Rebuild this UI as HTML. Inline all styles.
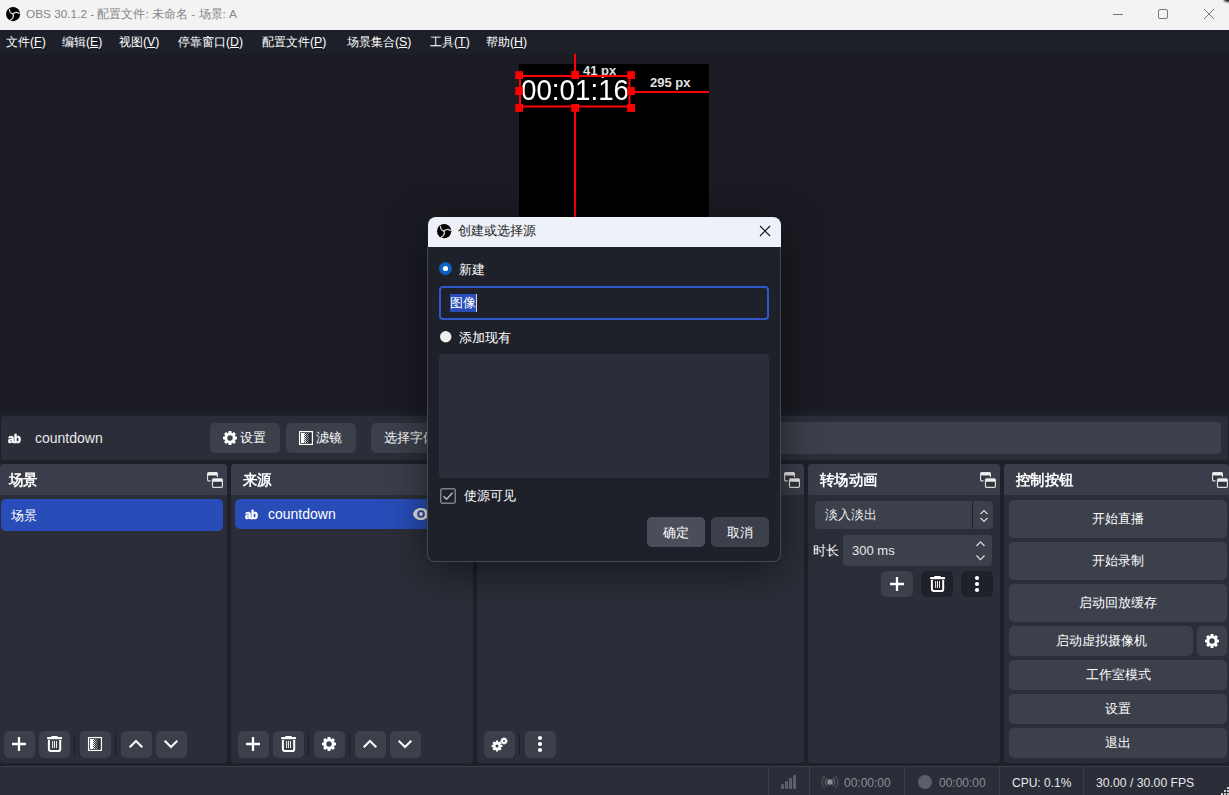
<!DOCTYPE html>
<html><head><meta charset="utf-8">
<style>
*{box-sizing:border-box;margin:0;padding:0}
html,body{width:1229px;height:795px;overflow:hidden;background:#1f212a;font-family:"Liberation Sans",sans-serif;color:#fff}
.a{position:absolute}
.t{position:absolute;white-space:nowrap;line-height:1}
.btn{position:absolute;background:#3c404b;border-radius:5px}
.dock{position:absolute;background:#2b2e38;border-radius:4px;overflow:hidden}
.dt{position:absolute;left:0;right:0;top:0;height:31px;background:#3b3e4a}
.dtt{position:absolute;top:8px;font-size:15px;font-weight:bold;white-space:nowrap;line-height:1;transform:scaleX(.96);transform-origin:0 0}
.sep{position:absolute;width:2px;background:#1f212a}
.vs{position:absolute;width:1px;background:#1b1d24;top:734px;height:21px}
svg{position:absolute;overflow:visible}
.m{font-size:12.3px;top:36px}
.cb{position:absolute;background:#3c404b;border-radius:5px;font-size:13px;line-height:1;text-align:center;white-space:nowrap}
</style></head><body>
<!-- ============ title bar ============ -->
<div class="a" style="left:0;top:0;width:1229px;height:30px;background:#f3f3f3"></div>
<svg style="left:5.9px;top:6.8px" width="14.2" height="14.2" viewBox="0 0 14.2 14.2"><circle cx="7.1" cy="7.1" r="7.1" fill="#000"/><g fill="none" stroke="#d0d0d0" stroke-linecap="round"><path d="M3.5 2.4C3.3 4.6 4.6 6.3 7 7" stroke-width="1.3"/><path d="M7 7C8.4 5.4 11.2 4.8 13.2 6.4" stroke-width="1.3"/><path d="M7 7C7.7 8.9 6.9 11.6 4.4 13" stroke-width="1.3"/></g></svg>
<div class="t" style="left:26px;top:9px;font-size:11.8px;color:#858585">OBS 30.1.2 - 配置文件: 未命名 - 场景: A</div>
<svg style="left:1113px;top:14px" width="10" height="1"><rect x="0" y="0" width="10" height="1" fill="#7a7a7a"/></svg>
<svg style="left:1158px;top:9px" width="10" height="10"><rect x="0.5" y="0.5" width="9" height="9" rx="1.5" fill="none" stroke="#7a7a7a" stroke-width="1"/></svg>
<svg style="left:1204px;top:9px" width="10" height="10"><path d="M0 0L10 10M10 0L0 10" stroke="#7a7a7a" stroke-width="1"/></svg>

<div class="a" style="left:1224px;top:-3px;width:8px;height:5px;border-radius:50%;background:#111;filter:blur(1px)"></div>
<!-- ============ menu bar ============ -->
<div class="a" style="left:0;top:30px;width:1229px;height:24px;background:#1e2029"></div>
<div class="t m" style="left:6px">文件(<u>F</u>)</div>
<div class="t m" style="left:62px">编辑(<u>E</u>)</div>
<div class="t m" style="left:119px">视图(<u>V</u>)</div>
<div class="t m" style="left:178px">停靠窗口(<u>D</u>)</div>
<div class="t m" style="left:262px">配置文件(<u>P</u>)</div>
<div class="t m" style="left:347px">场景集合(<u>S</u>)</div>
<div class="t m" style="left:430px">工具(<u>T</u>)</div>
<div class="t m" style="left:486px">帮助(<u>H</u>)</div>

<!-- ============ preview ============ -->
<div class="a" style="left:0;top:54px;width:1229px;height:358px;background:#1b1c23"></div>
<div class="a" style="left:519px;top:64px;width:190px;height:348px;background:#000"></div>
<div class="t" style="left:520.5px;top:75.3px;font-size:30px;color:#fff;transform:scaleX(.925);transform-origin:0 0">00:01:16</div>
<div class="t" style="left:583px;top:64px;font-size:13px;font-weight:bold;color:#e0e0e0">41 px</div>
<div class="t" style="left:650px;top:76px;font-size:13px;font-weight:bold;color:#e0e0e0">295 px</div>
<svg style="left:0;top:0" width="1229" height="795">
 <g fill="none" stroke="#ff0000" stroke-width="2">
  <line x1="575" y1="54" x2="575" y2="76"/>
  <rect x="520" y="76" width="109.5" height="30.5"/>
  <line x1="629" y1="92" x2="709" y2="92"/>
  <line x1="575" y1="107" x2="575" y2="412"/>
 </g>
 <g fill="#ff0000">
  <rect x="515.3" y="71.2" width="7.7" height="7.8"/><rect x="571.3" y="70.8" width="7.7" height="8.2"/><rect x="627.2" y="71.2" width="7.7" height="7.8"/>
  <rect x="515.3" y="87" width="7.7" height="8"/><rect x="627.2" y="87" width="7.7" height="8"/>
  <rect x="515.3" y="104" width="7.7" height="7.9"/><rect x="571.3" y="104" width="7.7" height="7.9"/><rect x="627.2" y="104" width="7.7" height="7.9"/>
 </g>
</svg>

<!-- ============ context bar ============ -->
<div class="a" style="left:1px;top:416px;width:1227px;height:44px;background:#2b2e38;border-radius:4px"></div>
<div class="t" style="left:8px;top:432px;font-size:13px;font-weight:bold;-webkit-text-stroke:.5px #fff;letter-spacing:-.3px;transform:scaleX(.88);transform-origin:0 0">ab</div>
<div class="t" style="left:35px;top:431px;font-size:14px;color:#e8e8ea">countdown</div>
<div class="btn" style="left:210px;top:423px;width:70px;height:30px"></div>
<div class="t" style="left:240px;top:431px;font-size:13px">设置</div>
<div class="btn" style="left:286px;top:423px;width:70px;height:30px"></div>
<div class="t" style="left:316px;top:431px;font-size:13px">滤镜</div>
<div class="btn" style="left:371px;top:423px;width:90px;height:30px"></div>
<div class="t" style="left:384px;top:431px;font-size:13px">选择字体</div>
<div class="a" style="left:780px;top:422px;width:441px;height:32px;background:#3c404b;border-radius:4px"></div>

<!-- ============ docks ============ -->
<!-- scenes -->
<div class="dock" style="left:0;top:464px;width:227px;height:299px">
 <div class="dt"><span class="dtt" style="left:9px">场景</span></div>
</div>
<div class="a" style="left:1px;top:499px;width:222px;height:32px;background:#284cb8;border-radius:5px"></div>
<div class="t" style="left:11px;top:509px;font-size:13px">场景</div>
<div class="btn" style="left:4px;top:731px;width:31px;height:27px"></div>
<div class="btn" style="left:39px;top:731px;width:31px;height:27px"></div>
<div class="vs" style="left:74px"></div>
<div class="btn" style="left:80px;top:731px;width:31px;height:27px"></div>
<div class="vs" style="left:115px"></div>
<div class="btn" style="left:121px;top:731px;width:31px;height:27px"></div>
<div class="btn" style="left:156px;top:731px;width:31px;height:27px"></div>

<!-- sources -->
<div class="dock" style="left:231px;top:464px;width:242px;height:299px">
 <div class="dt"><span class="dtt" style="left:12px">来源</span></div>
</div>
<div class="a" style="left:235px;top:499px;width:234px;height:30px;background:#284cb8;border-radius:5px"></div>
<div class="t" style="left:244.5px;top:508px;font-size:13px;font-weight:bold;-webkit-text-stroke:.5px #fff;letter-spacing:-.3px;transform:scaleX(.88);transform-origin:0 0">ab</div>
<div class="t" style="left:268px;top:507px;font-size:14px">countdown</div>
<div class="btn" style="left:238px;top:731px;width:31px;height:27px"></div>
<div class="btn" style="left:273px;top:731px;width:31px;height:27px"></div>
<div class="vs" style="left:308px"></div>
<div class="btn" style="left:314px;top:731px;width:31px;height:27px"></div>
<div class="vs" style="left:349px"></div>
<div class="btn" style="left:355px;top:731px;width:31px;height:27px"></div>
<div class="btn" style="left:390px;top:731px;width:31px;height:27px"></div>

<!-- audio mixer -->
<div class="dock" style="left:477px;top:464px;width:327px;height:299px">
 <div class="dt"><span class="dtt" style="left:12px">混音器</span></div>
</div>
<div class="btn" style="left:484px;top:731px;width:31px;height:27px"></div>
<div class="vs" style="left:519px"></div>
<div class="btn" style="left:525px;top:731px;width:31px;height:27px"></div>

<!-- transitions -->
<div class="dock" style="left:808px;top:464px;width:192px;height:299px">
 <div class="dt"><span class="dtt" style="left:12px">转场动画</span></div>
</div>
<div class="a" style="left:815px;top:501px;width:178px;height:28px;background:#3c404b;border-radius:4px"></div>
<div class="a" style="left:972px;top:501px;width:1px;height:28px;background:#1f212a"></div>
<div class="t" style="left:825px;top:508px;font-size:13px;color:#e8e8ea">淡入淡出</div>
<div class="t" style="left:813px;top:544px;font-size:13px">时长</div>
<div class="a" style="left:843px;top:535px;width:149px;height:31px;background:#3c404b;border-radius:4px"></div>
<div class="t" style="left:852px;top:544px;font-size:13px;color:#e8e8ea">300 ms</div>
<div class="btn" style="left:881px;top:571px;width:32px;height:26px"></div>
<div class="btn" style="left:921px;top:571px;width:32px;height:26px;background:#1f212a"></div>
<div class="btn" style="left:961px;top:571px;width:32px;height:26px;background:#1f212a"></div>

<!-- controls -->
<div class="dock" style="left:1004px;top:464px;width:225px;height:299px">
 <div class="dt"><span class="dtt" style="left:12px">控制按钮</span></div>
</div>
<div class="cb" style="left:1009px;top:500px;width:218px;height:38px;padding-top:12px">开始直播</div>
<div class="cb" style="left:1009px;top:542px;width:218px;height:38px;padding-top:12px">开始录制</div>
<div class="cb" style="left:1009px;top:584px;width:218px;height:38px;padding-top:12px">启动回放缓存</div>
<div class="cb" style="left:1009px;top:626px;width:184px;height:30px;padding-top:8px">启动虚拟摄像机</div>
<div class="cb" style="left:1197px;top:626px;width:30px;height:30px"></div>
<div class="cb" style="left:1009px;top:660px;width:218px;height:30px;padding-top:8px">工作室模式</div>
<div class="cb" style="left:1009px;top:694px;width:218px;height:30px;padding-top:8px">设置</div>
<div class="cb" style="left:1009px;top:728px;width:218px;height:30px;padding-top:8px">退出</div>

<!-- icons -->
<svg style="left:12px;top:737px" width="14" height="14"><path d="M7 0V14M0 7H14" stroke="#fff" stroke-width="2.3"/></svg>
<svg style="left:47px;top:736px" width="16" height="17" viewBox="0 0 16 17"><rect x="4.3" y="0" width="6.4" height="1.6" rx="0.6" fill="#fff"/><rect x="0" y="1" width="15.2" height="2.2" rx="1" fill="#fff"/><path d="M1.9 4V13.3a1.8 1.8 0 0 0 1.8 1.8H11.4a1.8 1.8 0 0 0 1.8-1.8V4" fill="none" stroke="#fff" stroke-width="2"/><path d="M5.6 5V12M7.5 5V12M9.5 5V12" stroke="#fff" stroke-width="0.9"/></svg>
<svg style="left:88px;top:737px" width="14" height="14" viewBox="0 0 14 14"><rect x="0.6" y="0.6" width="12.8" height="12.8" fill="#2c2e36" stroke="#fff" stroke-width="1.25"/><rect x="2" y="2" width="3" height="10" fill="#fff"/><rect x="5" y="2" width="1" height="1" fill="#fff"/><rect x="7" y="2" width="1" height="1" fill="#aaa"/><rect x="9" y="2" width="1" height="1" fill="#777"/><rect x="5" y="3" width="1" height="1" fill="#555"/><rect x="6" y="3" width="1" height="1" fill="#fff"/><rect x="8" y="3" width="1" height="1" fill="#999"/><rect x="5" y="4" width="1" height="1" fill="#fff"/><rect x="7" y="4" width="1" height="1" fill="#aaa"/><rect x="9" y="4" width="1" height="1" fill="#777"/><rect x="5" y="5" width="1" height="1" fill="#555"/><rect x="6" y="5" width="1" height="1" fill="#fff"/><rect x="8" y="5" width="1" height="1" fill="#999"/><rect x="5" y="6" width="1" height="1" fill="#fff"/><rect x="7" y="6" width="1" height="1" fill="#aaa"/><rect x="9" y="6" width="1" height="1" fill="#777"/><rect x="5" y="7" width="1" height="1" fill="#555"/><rect x="6" y="7" width="1" height="1" fill="#fff"/><rect x="8" y="7" width="1" height="1" fill="#999"/><rect x="5" y="8" width="1" height="1" fill="#fff"/><rect x="7" y="8" width="1" height="1" fill="#aaa"/><rect x="9" y="8" width="1" height="1" fill="#777"/><rect x="5" y="9" width="1" height="1" fill="#555"/><rect x="6" y="9" width="1" height="1" fill="#fff"/><rect x="8" y="9" width="1" height="1" fill="#999"/><rect x="5" y="10" width="1" height="1" fill="#fff"/><rect x="7" y="10" width="1" height="1" fill="#aaa"/><rect x="9" y="10" width="1" height="1" fill="#777"/><rect x="5" y="11" width="1" height="1" fill="#555"/><rect x="6" y="11" width="1" height="1" fill="#fff"/><rect x="8" y="11" width="1" height="1" fill="#999"/></svg>
<svg style="left:129px;top:740px" width="14" height="8"><path d="M0.7 7.3L7 1L13.3 7.3" fill="none" stroke="#fff" stroke-width="2"/></svg>
<svg style="left:164px;top:740px" width="14" height="8"><path d="M0.7 0.7L7 7L13.3 0.7" fill="none" stroke="#fff" stroke-width="2"/></svg>
<svg style="left:246px;top:737px" width="14" height="14"><path d="M7 0V14M0 7H14" stroke="#fff" stroke-width="2.3"/></svg>
<svg style="left:281px;top:736px" width="16" height="17" viewBox="0 0 16 17"><rect x="4.3" y="0" width="6.4" height="1.6" rx="0.6" fill="#fff"/><rect x="0" y="1" width="15.2" height="2.2" rx="1" fill="#fff"/><path d="M1.9 4V13.3a1.8 1.8 0 0 0 1.8 1.8H11.4a1.8 1.8 0 0 0 1.8-1.8V4" fill="none" stroke="#fff" stroke-width="2"/><path d="M5.6 5V12M7.5 5V12M9.5 5V12" stroke="#fff" stroke-width="0.9"/></svg>
<svg style="left:321px;top:736px" width="16" height="16"><path fill="#fff" fill-rule="evenodd" d="M6.28 2.88L6.66 1.03L9.34 1.03L9.72 2.88L10.40 3.16L11.98 2.12L13.88 4.02L12.84 5.60L13.12 6.28L14.97 6.66L14.97 9.34L13.12 9.72L12.84 10.40L13.88 11.98L11.98 13.88L10.40 12.84L9.72 13.12L9.34 14.97L6.66 14.97L6.28 13.12L5.60 12.84L4.02 13.88L2.12 11.98L3.16 10.40L2.88 9.72L1.03 9.34L1.03 6.66L2.88 6.28L3.16 5.60L2.12 4.02L4.02 2.12L5.60 3.16ZM10.70 8.00a2.7 2.7 0 1 0 -5.40 0a2.7 2.7 0 1 0 5.40 0Z"/></svg>
<svg style="left:363px;top:740px" width="14" height="8"><path d="M0.7 7.3L7 1L13.3 7.3" fill="none" stroke="#fff" stroke-width="2"/></svg>
<svg style="left:398px;top:740px" width="14" height="8"><path d="M0.7 0.7L7 7L13.3 0.7" fill="none" stroke="#fff" stroke-width="2"/></svg>
<svg style="left:490.5px;top:739.5px" width="12" height="12"><path fill="#fff" fill-rule="evenodd" d="M4.67 2.12L5.01 0.59L6.99 0.59L7.33 2.12L7.81 2.32L9.12 1.47L10.53 2.88L9.68 4.19L9.88 4.67L11.41 5.01L11.41 6.99L9.88 7.33L9.68 7.81L10.53 9.12L9.12 10.53L7.81 9.68L7.33 9.88L6.99 11.41L5.01 11.41L4.67 9.88L4.19 9.68L2.88 10.53L1.47 9.12L2.32 7.81L2.12 7.33L0.59 6.99L0.59 5.01L2.12 4.67L2.32 4.19L1.47 2.88L2.88 1.47L4.19 2.32ZM7.50 6.00a1.5 1.5 0 1 0 -3.00 0a1.5 1.5 0 1 0 3.00 0Z"/></svg>
<svg style="left:499.5px;top:736.5px" width="8" height="8"><path fill="#fff" fill-rule="evenodd" d="M3.07 1.47L3.30 0.47L4.70 0.47L4.93 1.47L5.13 1.55L6.01 1.01L6.99 1.99L6.45 2.87L6.53 3.07L7.53 3.30L7.53 4.70L6.53 4.93L6.45 5.13L6.99 6.01L6.01 6.99L5.13 6.45L4.93 6.53L4.70 7.53L3.30 7.53L3.07 6.53L2.87 6.45L1.99 6.99L1.01 6.01L1.55 5.13L1.47 4.93L0.47 4.70L0.47 3.30L1.47 3.07L1.55 2.87L1.01 1.99L1.99 1.01L2.87 1.55ZM5.00 4.00a1.0 1.0 0 1 0 -2.00 0a1.0 1.0 0 1 0 2.00 0Z"/></svg>
<svg style="left:537px;top:735px" width="6" height="18"><circle cx="3" cy="3" r="2.1" fill="#fff"/><circle cx="3" cy="9" r="2.1" fill="#fff"/><circle cx="3" cy="15" r="2.1" fill="#fff"/></svg>
<svg style="left:207px;top:472px" width="17" height="17" viewBox="0 0 17 17"><rect x="0.6" y="0.6" width="9.8" height="8.2" rx="1.1" fill="#30333d" stroke="#ddd" stroke-width="1.2"/><rect x="0.6" y="0.6" width="9.8" height="2.9" rx="1" fill="#eee"/><rect x="3.6" y="5.1" width="13.2" height="11.8" rx="1.5" fill="#3b3e4a"/><rect x="5.5" y="6.9" width="9.9" height="8.5" rx="1.1" fill="#30333d" stroke="#ddd" stroke-width="1.2"/><rect x="5.5" y="6.9" width="9.9" height="2.9" rx="1" fill="#eee"/></svg>
<svg style="left:784px;top:472px" width="17" height="17" viewBox="0 0 17 17"><rect x="0.6" y="0.6" width="9.8" height="8.2" rx="1.1" fill="#30333d" stroke="#ddd" stroke-width="1.2"/><rect x="0.6" y="0.6" width="9.8" height="2.9" rx="1" fill="#eee"/><rect x="3.6" y="5.1" width="13.2" height="11.8" rx="1.5" fill="#3b3e4a"/><rect x="5.5" y="6.9" width="9.9" height="8.5" rx="1.1" fill="#30333d" stroke="#ddd" stroke-width="1.2"/><rect x="5.5" y="6.9" width="9.9" height="2.9" rx="1" fill="#eee"/></svg>
<svg style="left:980px;top:472px" width="17" height="17" viewBox="0 0 17 17"><rect x="0.6" y="0.6" width="9.8" height="8.2" rx="1.1" fill="#30333d" stroke="#ddd" stroke-width="1.2"/><rect x="0.6" y="0.6" width="9.8" height="2.9" rx="1" fill="#eee"/><rect x="3.6" y="5.1" width="13.2" height="11.8" rx="1.5" fill="#3b3e4a"/><rect x="5.5" y="6.9" width="9.9" height="8.5" rx="1.1" fill="#30333d" stroke="#ddd" stroke-width="1.2"/><rect x="5.5" y="6.9" width="9.9" height="2.9" rx="1" fill="#eee"/></svg>
<svg style="left:1212px;top:472px" width="17" height="17" viewBox="0 0 17 17"><rect x="0.6" y="0.6" width="9.8" height="8.2" rx="1.1" fill="#30333d" stroke="#ddd" stroke-width="1.2"/><rect x="0.6" y="0.6" width="9.8" height="2.9" rx="1" fill="#eee"/><rect x="3.6" y="5.1" width="13.2" height="11.8" rx="1.5" fill="#3b3e4a"/><rect x="5.5" y="6.9" width="9.9" height="8.5" rx="1.1" fill="#30333d" stroke="#ddd" stroke-width="1.2"/><rect x="5.5" y="6.9" width="9.9" height="2.9" rx="1" fill="#eee"/></svg>
<svg style="left:890px;top:577px" width="14" height="14"><path d="M7 0V14M0 7H14" stroke="#fff" stroke-width="2.3"/></svg>
<svg style="left:930px;top:576px" width="16" height="17" viewBox="0 0 16 17"><rect x="4.3" y="0" width="6.4" height="1.6" rx="0.6" fill="#fff"/><rect x="0" y="1" width="15.2" height="2.2" rx="1" fill="#fff"/><path d="M1.9 4V13.3a1.8 1.8 0 0 0 1.8 1.8H11.4a1.8 1.8 0 0 0 1.8-1.8V4" fill="none" stroke="#fff" stroke-width="2"/><path d="M5.6 5V12M7.5 5V12M9.5 5V12" stroke="#fff" stroke-width="0.9"/></svg>
<svg style="left:974px;top:575px" width="6" height="18"><circle cx="3" cy="3" r="2.1" fill="#fff"/><circle cx="3" cy="9" r="2.1" fill="#fff"/><circle cx="3" cy="15" r="2.1" fill="#fff"/></svg>
<svg style="left:979.5px;top:509.5px" width="8" height="12"><path d="M0.5 4L4 0.6L7.5 4M0.5 8L4 11.4L7.5 8" fill="none" stroke="#ddd" stroke-width="1.1"/></svg>
<svg style="left:976px;top:541px" width="9" height="20"><path d="M0.5 5L4.5 0.8L8.5 5M0.5 14.5L4.5 18.7L8.5 14.5" fill="none" stroke="#ddd" stroke-width="1.2"/></svg>
<svg style="left:1204px;top:633px" width="16" height="16"><path fill="#fff" fill-rule="evenodd" d="M6.28 2.88L6.66 1.03L9.34 1.03L9.72 2.88L10.40 3.16L11.98 2.12L13.88 4.02L12.84 5.60L13.12 6.28L14.97 6.66L14.97 9.34L13.12 9.72L12.84 10.40L13.88 11.98L11.98 13.88L10.40 12.84L9.72 13.12L9.34 14.97L6.66 14.97L6.28 13.12L5.60 12.84L4.02 13.88L2.12 11.98L3.16 10.40L2.88 9.72L1.03 9.34L1.03 6.66L2.88 6.28L3.16 5.60L2.12 4.02L4.02 2.12L5.60 3.16ZM10.70 8.00a2.7 2.7 0 1 0 -5.40 0a2.7 2.7 0 1 0 5.40 0Z"/></svg>
<svg style="left:0;top:0" width="1" height="1"><path d="M413 514C414 510 417.3 508 421 508C424.7 508 428 510 429 514C428 518 424.7 520 421 520C417.3 520 414 518 413 514z" fill="#e8e6e0"/><circle cx="421" cy="514" r="3.8" fill="#2448b0"/><circle cx="421" cy="514" r="1.9" fill="#e8e6e0"/></svg>
<svg style="left:222px;top:430px" width="16" height="16"><path fill="#fff" fill-rule="evenodd" d="M6.28 2.88L6.66 1.03L9.34 1.03L9.72 2.88L10.40 3.16L11.98 2.12L13.88 4.02L12.84 5.60L13.12 6.28L14.97 6.66L14.97 9.34L13.12 9.72L12.84 10.40L13.88 11.98L11.98 13.88L10.40 12.84L9.72 13.12L9.34 14.97L6.66 14.97L6.28 13.12L5.60 12.84L4.02 13.88L2.12 11.98L3.16 10.40L2.88 9.72L1.03 9.34L1.03 6.66L2.88 6.28L3.16 5.60L2.12 4.02L4.02 2.12L5.60 3.16ZM10.70 8.00a2.7 2.7 0 1 0 -5.40 0a2.7 2.7 0 1 0 5.40 0Z"/></svg>
<svg style="left:299px;top:431px" width="14" height="14" viewBox="0 0 14 14"><rect x="0.6" y="0.6" width="12.8" height="12.8" fill="#2c2e36" stroke="#fff" stroke-width="1.25"/><rect x="2" y="2" width="3" height="10" fill="#fff"/><rect x="5" y="2" width="1" height="1" fill="#fff"/><rect x="7" y="2" width="1" height="1" fill="#aaa"/><rect x="9" y="2" width="1" height="1" fill="#777"/><rect x="5" y="3" width="1" height="1" fill="#555"/><rect x="6" y="3" width="1" height="1" fill="#fff"/><rect x="8" y="3" width="1" height="1" fill="#999"/><rect x="5" y="4" width="1" height="1" fill="#fff"/><rect x="7" y="4" width="1" height="1" fill="#aaa"/><rect x="9" y="4" width="1" height="1" fill="#777"/><rect x="5" y="5" width="1" height="1" fill="#555"/><rect x="6" y="5" width="1" height="1" fill="#fff"/><rect x="8" y="5" width="1" height="1" fill="#999"/><rect x="5" y="6" width="1" height="1" fill="#fff"/><rect x="7" y="6" width="1" height="1" fill="#aaa"/><rect x="9" y="6" width="1" height="1" fill="#777"/><rect x="5" y="7" width="1" height="1" fill="#555"/><rect x="6" y="7" width="1" height="1" fill="#fff"/><rect x="8" y="7" width="1" height="1" fill="#999"/><rect x="5" y="8" width="1" height="1" fill="#fff"/><rect x="7" y="8" width="1" height="1" fill="#aaa"/><rect x="9" y="8" width="1" height="1" fill="#777"/><rect x="5" y="9" width="1" height="1" fill="#555"/><rect x="6" y="9" width="1" height="1" fill="#fff"/><rect x="8" y="9" width="1" height="1" fill="#999"/><rect x="5" y="10" width="1" height="1" fill="#fff"/><rect x="7" y="10" width="1" height="1" fill="#aaa"/><rect x="9" y="10" width="1" height="1" fill="#777"/><rect x="5" y="11" width="1" height="1" fill="#555"/><rect x="6" y="11" width="1" height="1" fill="#fff"/><rect x="8" y="11" width="1" height="1" fill="#999"/></svg>
<!-- /icons -->
<!-- ============ status bar ============ -->
<div class="a" style="left:0;top:766px;width:1229px;height:1px;background:#3b3e4a"></div>
<div class="a" style="left:0;top:767px;width:1229px;height:28px;background:#2b2e38"></div>
<div class="a" style="left:768px;top:767px;width:1px;height:28px;background:#3b3e4a"></div>
<div class="a" style="left:809px;top:767px;width:1px;height:28px;background:#3b3e4a"></div>
<div class="a" style="left:904px;top:767px;width:1px;height:28px;background:#3b3e4a"></div>
<div class="a" style="left:999px;top:767px;width:1px;height:28px;background:#3b3e4a"></div>
<div class="a" style="left:1083px;top:767px;width:1px;height:28px;background:#3b3e4a"></div>
<svg style="left:781px;top:775px" width="15" height="14"><g fill="#5c5f69"><rect x="0" y="9" width="3" height="5" rx="1"/><rect x="4" y="6" width="3" height="8" rx="1"/><rect x="8" y="3" width="3" height="11" rx="1"/><rect x="12" y="0" width="3" height="14" rx="1"/></g></svg>
<svg style="left:822px;top:775px" width="16" height="14" viewBox="0 0 16 14"><g fill="none" stroke-width="1.5" stroke-linecap="round"><path d="M2.6 1.4A7.3 7.3 0 0 0 2.6 12.6M13.4 1.4A7.3 7.3 0 0 1 13.4 12.6" stroke="#474a52"/><path d="M4.9 3.6A4.4 4.4 0 0 0 4.9 10.4M11.1 3.6A4.4 4.4 0 0 1 11.1 10.4" stroke="#575a62"/></g><circle cx="8" cy="7" r="2.8" fill="#8b8d94"/></svg>
<div class="t" style="left:844px;top:777px;font-size:12px;color:#8a8d96">00:00:00</div>
<svg style="left:918px;top:775px" width="14" height="14"><circle cx="7" cy="7" r="7" fill="#5c5f69"/></svg>
<div class="t" style="left:939px;top:777px;font-size:12px;color:#8a8d96">00:00:00</div>
<div class="t" style="left:1012px;top:777px;font-size:12px;color:#e8e8ea">CPU: 0.1%</div>
<div class="t" style="left:1096px;top:777px;font-size:12.2px;color:#e8e8ea">30.00 / 30.00 FPS</div>

<svg style="left:1221px;top:787px" width="8" height="8"><g fill="#cfcfcf"><rect x="6" y="0" width="2" height="2"/><rect x="3" y="3" width="2" height="2"/><rect x="6" y="3" width="2" height="2"/><rect x="0" y="6" width="2" height="2"/><rect x="3" y="6" width="2" height="2"/><rect x="6" y="6" width="2" height="2"/></g></svg>
<!-- ============ dialog ============ -->
<div class="a" style="left:427px;top:217px;width:354px;height:345px;border-radius:8px;box-shadow:0 10px 40px rgba(0,0,0,.5)"></div>
<div class="a" style="left:427.5px;top:217px;width:353px;height:30px;background:#eff1f8;border-radius:8px 8px 0 0"></div>
<div class="a" style="left:427px;top:247px;width:354px;height:315px;background:#1f212a;border:1px solid #45474f;border-top:none;border-radius:0 0 8px 8px"></div>
<svg style="left:436.8px;top:223.8px" width="14.3" height="14.3" viewBox="0 0 14.2 14.2"><circle cx="7.1" cy="7.1" r="7.1" fill="#000"/><g fill="none" stroke="#d0d0d0" stroke-linecap="round"><path d="M3.5 2.4C3.3 4.6 4.6 6.3 7 7" stroke-width="1.3"/><path d="M7 7C8.4 5.4 11.2 4.8 13.2 6.4" stroke-width="1.3"/><path d="M7 7C7.7 8.9 6.9 11.6 4.4 13" stroke-width="1.3"/></g></svg>
<div class="t" style="left:458px;top:225px;font-size:12.5px;color:#222">创建或选择源</div>
<svg style="left:760px;top:226px" width="10" height="10"><path d="M0 0L10 10M10 0L0 10" stroke="#111" stroke-width="1.1"/></svg>
<svg style="left:439px;top:262px" width="13" height="13"><circle cx="6.5" cy="6.5" r="6.5" fill="#0a5fc2"/><circle cx="6.5" cy="6.5" r="2.6" fill="#fff"/></svg>
<div class="t" style="left:459px;top:263px;font-size:13px">新建</div>
<div class="a" style="left:439px;top:286px;width:330px;height:34px;border:2px solid #2f57c9;border-radius:4px;background:#1f212a"></div>
<div class="a" style="left:450px;top:294px;width:26px;height:18px;background:#284cb8"></div>
<div class="a" style="left:476px;top:294px;width:1px;height:18px;background:#ddd"></div>
<div class="t" style="left:450px;top:296px;font-size:13px">图像</div>
<svg style="left:440px;top:330.8px" width="12" height="12"><circle cx="5.7" cy="5.7" r="5.7" fill="#eeeeee"/></svg>
<div class="t" style="left:459px;top:331px;font-size:13px">添加现有</div>
<div class="a" style="left:439px;top:354px;width:330px;height:124px;background:#2b2e38;border-radius:4px"></div>
<svg style="left:440px;top:488px" width="16" height="16"><rect x="0.75" y="0.75" width="14.5" height="14.5" rx="2" fill="none" stroke="#7c7f87" stroke-width="1.5"/><path d="M3.5 8.2l3 3 6-6.5" fill="none" stroke="#b8b8bc" stroke-width="1.5"/></svg>
<div class="t" style="left:464px;top:489px;font-size:13px">使源可见</div>
<div class="cb" style="left:647px;top:517px;width:58px;height:30px;padding-top:9px;background:#4b4e5a">确定</div>
<div class="cb" style="left:711px;top:517px;width:58px;height:30px;padding-top:9px">取消</div>
</body></html>
